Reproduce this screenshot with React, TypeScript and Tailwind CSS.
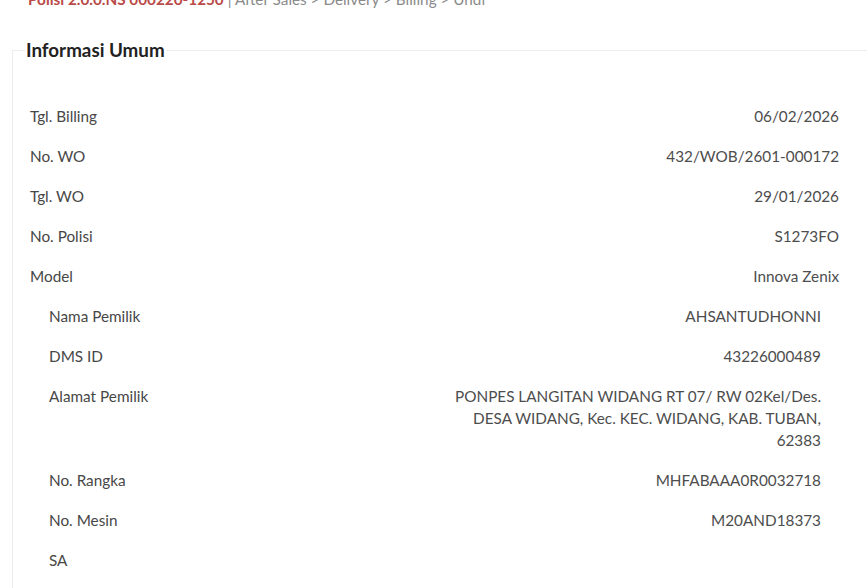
import React from "react";

type Row = { label: string; value: string };

const mainRows: Row[] = [
  { label: "Tgl. Billing", value: "06/02/2026" },
  { label: "No. WO", value: "432/WOB/2601-000172" },
  { label: "Tgl. WO", value: "29/01/2026" },
  { label: "No. Polisi", value: "S1273FO" },
  { label: "Model", value: "Innova Zenix" },
];

const subRows: Row[] = [
  { label: "Nama Pemilik", value: "AHSANTUDHONNI" },
  { label: "DMS ID", value: "43226000489" },
  {
    label: "Alamat Pemilik",
    value:
      "PONPES LANGITAN WIDANG RT 07/ RW 02Kel/Des. DESA WIDANG, Kec. KEC. WIDANG, KAB. TUBAN, 62383",
  },
  { label: "No. Rangka", value: "MHFABAAA0R0032718" },
  { label: "No. Mesin", value: "M20AND18373" },
  { label: "SA", value: "" },
];

function InfoRow({ row }: { row: Row }) {
  return (
    <div className="flex justify-between items-start py-[9px] text-[15.3px] leading-[22px]">
      <div className="text-[#474747]">{row.label}</div>
      <div className="w-[378px] text-right text-[#4d4d4d]">{row.value}</div>
    </div>
  );
}

export default function App() {
  return (
    <div
      className="w-[867px] h-[588px] overflow-hidden bg-white relative"
      style={{ fontFamily: "Lato, 'Open Sans', sans-serif" }}
    >
      <div className="mt-[-9px] pl-[28px] text-[15.3px] leading-[16px] whitespace-nowrap">
        <span className="text-[#b94a48] font-bold">Polisi 2.0.0.NS 000220-1250</span>
        <span className="text-[#8a8a8a]"> | After Sales &gt; Delivery &gt; Billing &gt; Undi</span>
      </div>
      <fieldset className="mt-[32px] ml-[12px] w-[880px] border border-[#ececec] pl-[17px] pr-[52px] pt-[35px] pb-[60px]">
        <legend className="px-[1px] ml-[-5px] text-[18.8px] font-bold text-[#222] leading-[22px]">
          Informasi Umum
        </legend>
        <div className="flex flex-col">
          {mainRows.map((r) => (
            <InfoRow key={r.label} row={r} />
          ))}
        </div>
        <div className="flex flex-col pl-[19px] pr-[18px]">
          {subRows.map((r) => (
            <InfoRow key={r.label} row={r} />
          ))}
        </div>
      </fieldset>
    </div>
  );
}
